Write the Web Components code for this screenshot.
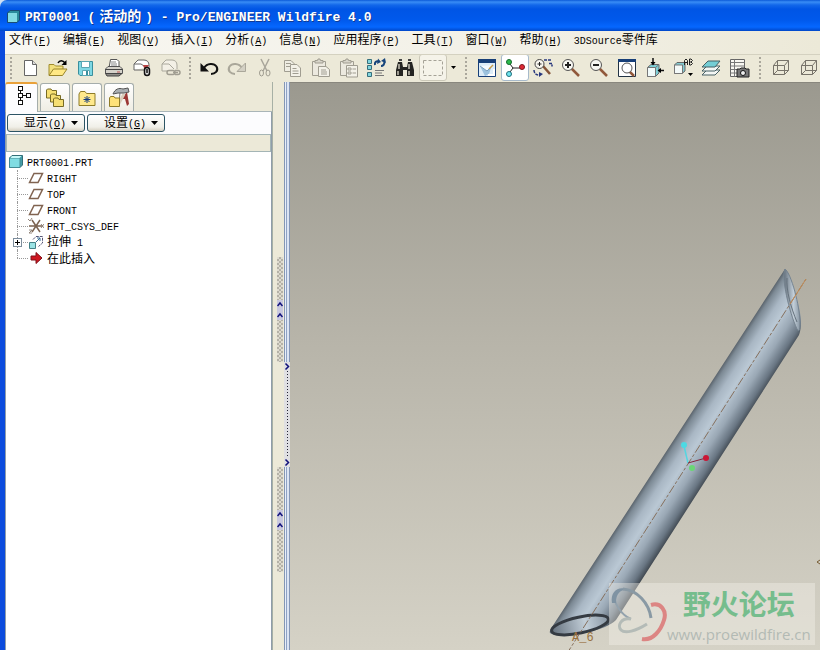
<!DOCTYPE html>
<html lang="zh-CN">
<head>
<meta charset="utf-8">
<title>PRT0001 - Pro/ENGINEER Wildfire 4.0</title>
<style>
html, body { height: 100%; margin: 0; }
body { overflow: hidden; background: #cfe0f4; color: #000; font: 12px/16px "Noto Sans CJK SC", sans-serif; }
</style>
</head>
<body>
<app-window></app-window>
<script>
const ICONS = {
  doc: '<path d="M6.500 4.500H14.500L18.500 8.500V19.500H6.500Z" fill="#fff" stroke="#666"/><path d="M14.500 4.500V8.500H18.500" fill="#ddd" stroke="#666"/>',
  open: '<path d="M3 19V8.500H8L9.500 10H17V13" fill="#f2e07c" stroke="#a08c2c"/><path d="M3 19.500L7.500 13H21L16.500 19.500Z" fill="#ffe884" stroke="#98842a"/><path d="M12 7C13.500 4 17 4 19 7" fill="none" stroke="#000" stroke-width="1.500"/><path d="M20.500 4V9H15.500Z"/>',
  save: '<path d="M4.500 5.500H18.500V19.500H6L4.500 18Z" fill="#7fd8e4" stroke="#3a8f9d"/><path d="M7.500 5.500H15.500V11.500H7.500ZM8.500 14.500H15.500V19.500H8.500Z" fill="#fff" stroke="#5aa6b2"/><path d="M12 15h2v4h-2z" fill="#3a8f9d"/>',
  print: '<path d="M7 12L8.500 3.500H15L17 5.500V12Z" fill="#fff" stroke="#555"/><path d="M9 6H14M9 8H15M9 10H15" stroke="#888"/><path d="M3.500 13L6 10.500H18L20.500 13V17.500H3.500Z" fill="#d5d2ca" stroke="#555"/><path d="M3.500 13.500H20.500M5 20H17L20 17.500H3.500Z" fill="#8d8b86" stroke="#444"/><path d="M15 16h3" stroke="#b55" stroke-width="1"/>',
  mail: '<path d="M4 14V8L8 4H14C17 4 19 6 19 9V11M4 14H15M4 8H11L14 10" fill="#fff" stroke="#666"/><path d="M13 9H19L17 12H14Z" fill="#b44"/><rect x="14.500" y="11.500" width="5" height="8" rx="2.500" fill="#ddd" stroke="#111" stroke-width="1.500"/><path d="M17 13V17" stroke="#111" stroke-width="1.500"/>',
  link: '<path d="M4 15V8L8 4H14C17 4 19 6 19 9V13M4 15H10M4 8H11L16 13" fill="#f3f0e6" stroke="#aaa89c"/><path d="M11 14.500h4a2 2 0 0 1 0 4h-4a2 2 0 0 1 0-4M15 16.500h5" fill="none" stroke="#a09d91" stroke-width="1.500"/><path d="M17 14.500h3a2 2 0 0 1 0 4h-3" fill="none" stroke="#a09d91" stroke-width="1.500"/>',
  undo: '<path d="M7 12C10 7 17 7 19.500 10.500C22 15 18 18 14 18" fill="none" stroke="#111" stroke-width="2"/><path d="M3.500 7V15.500H12Z" fill="#111"/>',
  redo: '<path d="M17 12C14 7 7 7 4.500 10.500C2 15 6 18 10 18" fill="none" stroke="#aaa79a" stroke-width="2"/><path d="M20.500 7V15.500H12Z" fill="#d3d0c4" stroke="#aaa79a"/>',
  cut: '<path d="M8 3L14 15M16 3L10 15" fill="none" stroke="#a9a69b" stroke-width="1.500"/><ellipse cx="8.500" cy="17" rx="2" ry="3" fill="none" stroke="#a09d91"/><ellipse cx="15" cy="17" rx="2" ry="3" fill="none" stroke="#a09d91"/>',
  copy: '<path d="M3.500 4.500H10L13.500 8V15.500H3.500Z" fill="#efede3" stroke="#a09d91"/><path d="M5 7.500h5M5 10.500h5" stroke="#a09d91"/><path d="M9.500 8.500H16L19.500 12V20.500H9.500Z" fill="#f3f1e8" stroke="#a09d91"/><path d="M11.500 12.500h4M11.500 15h6M11.500 17.500h6" stroke="#a09d91"/>',
  paste: '<path d="M3.500 5.500H16.500V19.500H3.500Z" fill="#ece9df" stroke="#a09d91"/><path d="M6 7V4.500H8.500L9 3H11L11.500 4.500H14V7Z" fill="#d7d4c9" stroke="#a09d91"/><path d="M9.500 10.500H17L20.500 13.500V20.500H9.500Z" fill="#f3f1e8" stroke="#a09d91"/><path d="M12 14h5M12 16h6M12 18h6" stroke="#a09d91"/>',
  pastes: '<path d="M3.500 5.500H16.500V19.500H3.500Z" fill="#ece9df" stroke="#a09d91"/><path d="M6 7V4.500H8.500L9 3H11L11.500 4.500H14V7Z" fill="#d7d4c9" stroke="#a09d91"/><path d="M9.500 9.500H20.500V21H9.500Z" fill="#f3f1e8" stroke="#a09d91"/><path d="M11 12h3v2h-3zM11 16h3v2h-3zM15.500 13h3.500M15.500 17h3.500" stroke="#a09d91" fill="none"/>',
  regen: '<g fill="#83d5de" stroke="#356f7c"><path d="M2.500 3.500h4v4h-4zM2.500 9.500h4v4h-4zM2.500 16.500h4v4h-4z"/></g><path d="M10 9C9.500 6 11 5 13.500 5.500M19 6C20 8 18 10 16 10" fill="none" stroke="#17457c" stroke-width="2"/><path d="M13 2.500L16 6L12 8Z" fill="#17457c"/><path d="M16 5L20 2L21 7Z" fill="#17457c"/><path d="M10 14.500h9M10 17h7M10 19.500h9" stroke="#777"/>',
  find: '<path d="M5 6h4l1 5h4l1-5h4l2 8v6h-7v-6h-4v6H3v-6z" fill="#252522"/><path d="M6 8v5M16 8v5M5 15v4M16 15v4" stroke="#c5c1b5" stroke-width="1.500"/><path d="M6 4h3M15 4h3" stroke="#444" stroke-width="2"/>',
  marquee: '<rect x="2.500" y="4.500" width="19" height="15" fill="none" stroke="#a5a297" stroke-dasharray="3 2"/>',
  repaint: '<path d="M3.500 3.500H20.500V20.500H3.500Z" fill="#dcecf8" stroke="#173f78"/><path d="M3 3h18v4H3z" fill="#173f78"/><path d="M5 10L13 12L17 9L14 18L10 20Z" fill="#9cc2de"/><path d="M5 10L12 15L18 9" fill="#f6fbff" stroke="#7a9fbd"/><path d="M14 13L18 9" stroke="#c69c48" stroke-width="1.500"/><path d="M13 19h6v-6" fill="none" stroke="#fff" stroke-width="2"/>',
  spin: '<path d="M5.500 6L10 12L5.500 18M10 12H19" fill="none" stroke="#222"/><circle cx="6" cy="6" r="2.500" fill="#2bbb4c" stroke="#156a2b"/><circle cx="6" cy="18" r="2.500" fill="#6fe4ee" stroke="#206f7c"/><circle cx="19" cy="11" r="2.500" fill="#df2935" stroke="#7f1720"/>',
  orient: '<path d="M12 10L19 18" stroke="#855438" stroke-width="2.500"/><circle cx="8.500" cy="8" r="4.500" fill="#f8f6ef" stroke="#444"/><path d="M8.500 6v4M6.500 8h4" stroke="#222"/><path d="M13 4h7M18 7.500h3v3M3 14c0 3 2 5 5 5" fill="none" stroke="#27377d" stroke-width="1.500" stroke-dasharray="3 1"/><path d="M8 16v5l4-3z" fill="#27377d"/>',
  zin: '<path d="M12 12L20 20" stroke="#91583a" stroke-width="2.500"/><circle cx="9" cy="9" r="5.500" fill="#f7f7f2" stroke="#555"/><path d="M6 9h6M9 6v6" stroke="#222" stroke-width="2"/>',
  zout: '<path d="M12 12L20 20" stroke="#91583a" stroke-width="2.500"/><circle cx="9" cy="9" r="5.500" fill="#f7f7f2" stroke="#555"/><path d="M6 9h6" stroke="#222" stroke-width="2"/>',
  refit: '<path d="M3.500 3.500H20.500V20.500H3.500Z" fill="#fff" stroke="#234"/><path d="M3 3h18v3H3z" fill="#173f78"/><path d="M14 15L19 20" stroke="#91583a" stroke-width="2.500"/><circle cx="12" cy="12" r="5" fill="#fff" stroke="#555"/>',
  views: '<path d="M4.500 11.500L8 8.500H16V17L12.500 20.500H4.500Z" fill="#7fd0d7" stroke="#666"/><path d="M4.500 11.500H12.500V20.500H4.500Z" fill="#f1fbfb" stroke="#777"/><path d="M12.500 11.500L16 8.500" stroke="#777"/><path d="M10 2V7M21 14.500H17" stroke="#111" stroke-width="1.500"/><path d="M7.500 6h5l-2.500 3.500zM18 12v5l-3.500-2.500z"/>',
  named: '<path d="M3.500 9L6 6.500H14V15L11 17.500H3.500Z" fill="#84cbd2" stroke="#666"/><path d="M3.500 9H11.500V17.500H3.500Z" fill="#f4faf9" stroke="#777"/><path d="M13.500 9V4.500L15 3L16.500 4.500V9M13.500 6.500H16.500M18.500 3V9H20L21.500 7.500L20 6L21.500 4.500L20 3H18.500M18.500 6H20" fill="none" stroke="#222"/><path d="M17 17h5l-2.500 3z"/>',
  layers: '<g stroke="#476064"><path d="M3 19L8 14H21L16 19Z" fill="#f3f6f4"/><path d="M3 15L8 10H21L16 15Z" fill="#f3f6f4"/><path d="M3 11L9 5H21L16 11Z" fill="#74ced5"/></g>',
  view: '<path d="M3.500 3.500H17.500V20.500H3.500Z" fill="#f8f7f1" stroke="#666"/><path d="M3.500 6.500H17.500M3.500 10H17M3.500 13.500H17M3.500 17H17M7.500 3.500V20.500" stroke="#777"/><path d="M10 13h3l1-1h4l1 1h3v8H10Z" fill="#777" stroke="#222"/><circle cx="16" cy="17" r="2.500" fill="#eee" stroke="#111"/>',
  wire: '<path d="M4.500 9.500H15.500V18.500H4.500ZM8.500 4.500H19.500V14.500H8.500ZM4.500 9.500L8.500 4.500M15.500 9.500L19.500 4.500M15.500 18.500L19.500 14.500M4.500 18.500L8.500 14.500" fill="none" stroke="#77736a"/>',
  tree: '<path d="M10.500 5V18M11 11.500H17" stroke="#111"/><path d="M8 2h5v5H8zM8 9h5v5H8zM8 16h5v5H8zM16 9h5v5h-5z" fill="#111"/><path d="M9 3h3v3h-3zM9 10h3v3h-3zM9 17h3v3h-3zM17 10h3v3h-3z" fill="#fff"/>',
  folders: '<g fill="#f6df72" stroke="#776b25"><path d="M3.500 5V4L4.500 3H8L9 4.500H13.500V12H3.500Z"/><path d="M7.500 10V9L8.500 8H12L13 9.500H17.500V16H7.500Z"/><path d="M10.500 14V13L11.500 12H15L16 13.500H20.500V20.500H10.500Z"/></g>',
  fav: '<path d="M4 8L5.500 5.500H10L11.500 7.500H20V19.500H4Z" fill="#ffe98c" stroke="#8f7c28"/><path d="M12 10v7M8.500 13.500h7M9.500 11l5 5M14.500 11l-5 5" stroke="#163d80"/>',
  tools: '<path d="M11 6H13L12.500 12" fill="none" stroke="#777"/><path d="M14 13L20 6L22 18L20 20L18 13Z" fill="#9b3634"/><path d="M11 19L17 8" stroke="#d9cdbb" stroke-width="3"/><path d="M6 8C8 3 12 1.500 16 3L21 2L22 6L17 7L11 7Z" fill="#aab0b3" stroke="#555"/><path d="M2.500 12L3.500 10.500H7L8 12H12.500V20.500H2.500Z" fill="#ffe278" stroke="#8f7c28"/>',
  part: '<path d="M.500 4L3 1.500H13.500V11L11 13.500H.500Z" fill="#429da8" stroke="#326e77"/><path d="M.500 4H11V13.500H.500Z" fill="#80dce2" stroke="#428993"/><path d="M3 2h9.500L10.500 4H1.500z" fill="#c6f8f8"/>',
  plane: '<path d="M1.500 12.500L6 3.500H14.500L10 12.500Z" fill="#fff" stroke="#806350" stroke-width="1.500"/>',
  csys: '<path d="M4 2L12 14M12 2L4 14M1 8H15" stroke="#7c6350" stroke-width="1.500"/><path d="M0 1L2 3L4 0M13 6L16 10M16 6L13 10M1 12h3l-3 3h3" fill="none" stroke="#91857b"/>',
  extrude: '<path d="M1.500 8.500H7.500V14.500H1.500Z" fill="#9ae3e5" stroke="#448188"/><path d="M5 5.500L8 2.500H14.500V9L10.500 12.500" fill="none" stroke="#557" stroke-dasharray="3 1"/><path d="M8 8L12 4M9 4h3v3" fill="none" stroke="#386f96"/>',
  insert: '<path d="M3 6H8V2.500L14 8L8 13.500V10H3Z" fill="#cf1620" stroke="#801018"/>'
};
const icon = (name, size) => `<svg viewBox="0 0 ${size} ${size}" width="${size}" height="${size}" aria-hidden="true">${ICONS[name]}</svg>`;
const mixed = text => text.replace(/[\x20-\x7e]+/g, run =>
  `<span class="lat">${run.replace(/\((\w)\)/, '(<u>$1</u>)')}</span>`);
const BASE = `*{box-sizing:border-box}button{margin:0;padding:0;border:0;background:none;color:inherit;font:inherit;white-space:pre}
svg{display:block;flex:none}.lat{font-family:"Liberation Mono",monospace;font-size:10px}u{text-underline-offset:1px}`;
const define = (name, css, html) => customElements.define(name, class extends HTMLElement {
  connectedCallback() {
    if (this.shadowRoot) return;
    this.attachShadow({ mode: 'open' }).innerHTML = `<style>${BASE}${css}</style>${typeof html === 'function' ? html(this) : html}`;
  }
});

define('title-bar', `
:host{display:flex;align-items:center;gap:5px;height:31px;padding:2px 7px 0;border-radius:7px 0 0 0;color:#fff;
background:linear-gradient(#0b5ad8,#398df5 2px,#1267ea 5px,#0055e5 9px,#0059ec 20px,#0567ff 27px,#0047c8);
font-weight:700;font-size:14px;text-shadow:1px 1px #123a92}
h1{margin:0;font:inherit;white-space:pre}.lat{font-size:13px}.cjk{padding:0 4px}`,
`<svg viewBox="0 0 13 13" width="13" height="13"><path d="M.500 3L3 .500H12.500V10L10 12.500H.500Z" fill="#2b8d9c" stroke="#194c75"/><path d="M1 3h9v9H1z" fill="#83dbe3"/></svg>
<h1><span class="lat">PRT0001 (</span><span class="cjk">活动的</span><span class="lat">) - Pro/ENGINEER Wildfire 4.0</span></h1>`);

define('menu-bar', `
:host{display:flex;gap:12px;height:23px;align-items:center;padding:0 4px 4px;background:linear-gradient(90deg,#f8f7f2,#f2f0e6 65%,#ece9d8)}`,
() => ['文件(F)', '编辑(E)', '视图(V)', '插入(I)', '分析(A)', '信息(N)', '应用程序(P)', '工具(T)', '窗口(W)', '帮助(H)', '3DSource零件库']
  .map(t => `<button>${mixed(t)}</button>`).join(''));

define('tool-button', `
:host{display:block;flex:none;width:28px;height:27px}
button{display:grid;place-items:center;width:100%;height:100%;border:1px solid transparent;border-radius:3px}
:host([pressed]) button{background:#fff;border-color:#a7bacb}
:host([framed]) button{background:#f5f3e9;border-color:#cbc8b8}`,
el => `<button aria-label="${el.getAttribute('icon')}">${icon(el.getAttribute('icon'), 24)}</button>`);

define('tool-separator', `
:host{display:flex;flex:none;justify-content:center;width:14px;height:22px}
:host([narrow]){width:11px}
i{width:2px;background:repeating-linear-gradient(#aaa79c 0 2px,transparent 2px 4px)}`, '<i></i>');

define('tool-bar', `
:host{display:flex;align-items:center;height:28px;overflow:hidden;padding-bottom:2px;border-top:1px solid #d4d1c0;background:#ece9d8}
.drop{flex:none;width:12px;height:24px;display:grid;place-items:center}`, () => {
  const b = (names, extra = {}) => names.split(' ').map(n => `<tool-button icon="${n}" ${extra[n] || ''}></tool-button>`).join('');
  const s = '<tool-separator></tool-separator>', n = '<tool-separator narrow></tool-separator>';
  return n + b('doc open save print mail link') + n +
    b('undo redo cut copy paste pastes regen find marquee', { marquee: 'framed' }) +
    '<button class="drop" aria-label="选择"><svg viewBox="0 0 5 3" width="5" height="3"><path d="M0 0H5L2.500 3Z"/></svg></button>' + s +
    b('repaint spin orient zin zout refit views named layers view', { spin: 'pressed' }) + s + b('wire wire');
});

define('nav-tabs', `
:host{display:flex;align-items:flex-end;gap:2px;height:30px;border-bottom:1px solid #a9b5b8}
button{display:grid;place-items:center;width:30px;height:28px;border:1px solid #a5adab;border-bottom:0;border-radius:3px 3px 0 0;background:linear-gradient(#fff,#efede3)}
.on{width:33px;height:30px;margin-bottom:-1px;border-top:2px solid #e9a13a;background:#fcfcfe;place-items:start center}`,
() => ['tree', 'folders', 'fav', 'tools'].map((n, i) => `<button class="${i ? '' : 'on'}" aria-label="${n}">${icon(n, 24)}</button>`).join(''));

define('drop-button', `
:host{display:block;width:78px;height:18px}
button{display:flex;align-items:center;justify-content:center;gap:5px;width:100%;height:100%;padding-left:10px;border:1px solid #2c5464;border-radius:3px;background:linear-gradient(#fff,#f0efe8 75%,#d6d1c2)}`,
el => `<button><span>${mixed(el.getAttribute('label'))}</span><svg viewBox="0 0 7 4" width="7" height="4"><path d="M0 0H7L3.500 4Z"/></svg></button>`);

define('model-tree', `
:host{display:block;padding:2px 3px;flex:1}
ul{margin:0;padding:0;list-style:none}
li{white-space:pre}
.row{display:flex;align-items:center;height:16px;gap:2px}
ul ul{padding-left:8px}
ul ul .row{gap:3px}
ul ul li{position:relative;padding-left:11px}
ul ul li::before{content:"";position:absolute;left:0;top:0;height:16px;border-left:1px dotted #999}
ul ul li:last-child::before{height:8px}
ul ul li::after{content:"";position:absolute;left:0;top:8px;width:11px;border-top:1px dotted #999}
.plus{position:absolute;z-index:1;left:-4px;top:4px;width:9px;height:9px;border:1px solid #7d8d9c;background:#fff}
.plus svg{width:7px;height:7px}`, () => {
  const row = (i, t) => `<div class="row">${icon(i, 16)}<span>${mixed(t)}</span></div>`;
  const plus = '<button class="plus" aria-label="展开"><svg viewBox="0 0 7 7"><path d="M1 3.500h5M3.500 1v5" stroke="#000"/></svg></button>';
  return `<ul><li>${row('part', 'PRT0001.PRT')}<ul>${[['plane', 'RIGHT'], ['plane', 'TOP'], ['plane', 'FRONT'], ['csys', 'PRT_CSYS_DEF'], ['extrude', '拉伸 1'], ['insert', '在此插入']]
    .map(([i, t]) => `<li>${i === 'extrude' ? plus : ''}${row(i, t)}</li>`).join('')}</ul></li></ul>`;
});

define('nav-panel', `
:host{display:flex;flex-direction:column;width:267px;flex:none;background:#ece9d8}
.pane{display:flex;flex-direction:column;flex:1;border:1px solid #8f9daa;border-top:0;border-bottom:0;background:#fff}
.actions{display:flex;gap:2px;padding:2px 1px;background:#fcfcfe}
.strip{height:18px;border:1px solid #a4b5b5;background:#ece9d8}`,
`<nav-tabs></nav-tabs><div class="pane"><div class="actions"><drop-button label="显示(O)"></drop-button><drop-button label="设置(G)"></drop-button></div><div class="strip"></div><model-tree></model-tree></div>`);

define('split-bar', `
:host{display:flex;flex:none;width:18px;background:#ece9d8}
.grips{display:flex;flex-direction:column;align-items:center;gap:105px;width:12px;padding:175px 0 0 3px;border-left:1px solid #a7b0a5}
.grips button{display:grid;place-items:center;width:6px;height:105px;background:repeating-conic-gradient(#b5b2a7 0 25%,#dedbd0 0 50%) 0 0/4px 4px}
.rail{display:flex;flex-direction:column;width:6px}
.line{flex:1;border:solid #8496b5;border-width:0 1px;background:linear-gradient(90deg,#e9eef8 0 1px,#8fa3c4 1px 2px,#dce4f3 2px)}
.line:first-child{flex:none;height:280px}
.rail button{display:flex;flex-direction:column;align-items:center;justify-content:space-between;height:105px;background:#dfdfe2}
.rail i{flex:1;width:1px;background:repeating-linear-gradient(#223 0 1px,transparent 1px 3px)}`, () => {
  const up = '<svg viewBox="0 0 6 20" width="6" height="20"><path d="M0 0h6v20H0z" fill="#c9c9e0"/><path d="M.500 6L3 3L5.500 6M.500 17L3 14L5.500 17" fill="none" stroke="#10107a" stroke-width="1.500"/></svg>';
  const right = '<svg viewBox="0 0 6 9" width="6" height="9"><path d="M1.500 1.500L4.500 4.500L1.500 7.500" fill="none" stroke="#10107a" stroke-width="1.500"/></svg>';
  return `<div class="grips"><button aria-label="收起">${up}</button><button aria-label="收起">${up}</button></div>
<div class="rail"><div class="line"></div><button aria-label="展开">${right}<i></i>${right}</button><div class="line"></div></div>`;
});

define('forum-mark', `
:host{display:flex;align-items:center;width:206px;height:62px;background:rgba(244,243,236,.4)}
.words{display:flex;flex-direction:column;align-items:center}
b{color:#76bd8d;font:700 28px/41px "Noto Sans CJK SC",sans-serif}
span{color:#b3bab4;font:15px/21px "Open Sans",sans-serif}`,
`<svg viewBox="0 0 58 62" width="58" height="62"><g fill="none">
<path d="M5 12C5 20 12 32 22 36" stroke="#93a2ad" stroke-width="2"/>
<path d="M3 20C1 8 10 2 20 7C12 6 7 10 7 20Z" fill="#7f93a3"/><path d="M14 6C28 7 40 20 42 35" stroke="#8999a4" stroke-width="3"/>
<path d="M22 36C12 34 8 43 12 47C16 51 27 48 38 41" stroke="#b4bbb7" stroke-width="3"/>
<path d="M42 22C52 19 58 28 55 37C52 47 44 58 33 56" stroke="#dc8583" stroke-width="4"/></g></svg>
<div class="words"><b>野火论坛</b><span>www.proewildfire.cn</span></div>`);

define('model-view', `
:host{display:block;position:relative;flex:1;min-width:0;overflow:hidden;border-top:1px solid #89877e;background:linear-gradient(#9b998f,#b7b4a9 45%,#d5d2c6)}
.scene{position:absolute;inset:0;width:100%;height:100%}
forum-mark{position:absolute;right:5px;bottom:5px}`,
`<svg class="scene" viewBox="290 83 530 567" preserveAspectRatio="xMaxYMax meet">
<defs><linearGradient id="p" gradientUnits="userSpaceOnUse" x1="666" y1="449" x2="709" y2="477">
<stop offset="0" stop-color="#4c545c"/><stop offset=".1" stop-color="#7c8994"/><stop offset=".28" stop-color="#a9b7c4"/><stop offset=".45" stop-color="#bac8d4"/><stop offset=".68" stop-color="#9aa8b5"/><stop offset=".88" stop-color="#697683"/><stop offset="1" stop-color="#3f474f"/></linearGradient>
<linearGradient id="q" x1="0" x2="1"><stop offset="0" stop-color="#65717d"/><stop offset=".6" stop-color="#c2ced8"/><stop offset="1" stop-color="#8896a3"/></linearGradient></defs>
<path d="M785 269C790 272 801 306 801 322Q801 330 799 335L616 620Q608 628 585 633Q555 637 550 633Q549 631 552 627Z" fill="url(#p)"/>
<path d="M785 269C781 277 789 312 797 329Q800 334 800 323C800 306 791 273 785 269Z" fill="url(#q)" stroke="#75838f"/>
<path d="M787 278C786 290 791 308 797 322" fill="none" stroke="#64717c"/>
<ellipse cx="580" cy="625" rx="29" ry="8" transform="rotate(-12 580 625)" fill="url(#q)" stroke="#353b42" stroke-width="3"/>
<path d="M566 655L806 279" stroke="#86705d" stroke-dasharray="9 2 3 2"/><path d="M790 304L806 279" stroke="#c28b55"/>
<path d="M688 463L684 446" stroke="#55d5e0" stroke-width="1.500"/><circle cx="684" cy="445" r="3" fill="#4dd9e3"/>
<path d="M688 463L706 458" stroke="#85243b"/><circle cx="706" cy="458" r="3" fill="#ca1735"/><circle cx="692" cy="468" r="3" fill="#6ad675"/>
<text x="572" y="641" font-family="Liberation Mono, monospace" font-size="12" fill="#9a713f">A_6</text>
<path d="M820 560L817 562L820 564" stroke="#765b32" fill="none"/></svg><forum-mark></forum-mark>`);

define('app-window', `
:host{display:flex;flex-direction:column;height:100vh;overflow:hidden}
.frame{display:flex;flex-direction:column;flex:1;min-height:0;border-left:5px solid #0b4bdd;background:#ece9d8}
.work{display:flex;flex:1;min-height:0}`,
'<title-bar></title-bar><div class="frame"><menu-bar></menu-bar><tool-bar></tool-bar><div class="work"><nav-panel></nav-panel><split-bar></split-bar><model-view></model-view></div></div>');
</script>
</body>
</html>
